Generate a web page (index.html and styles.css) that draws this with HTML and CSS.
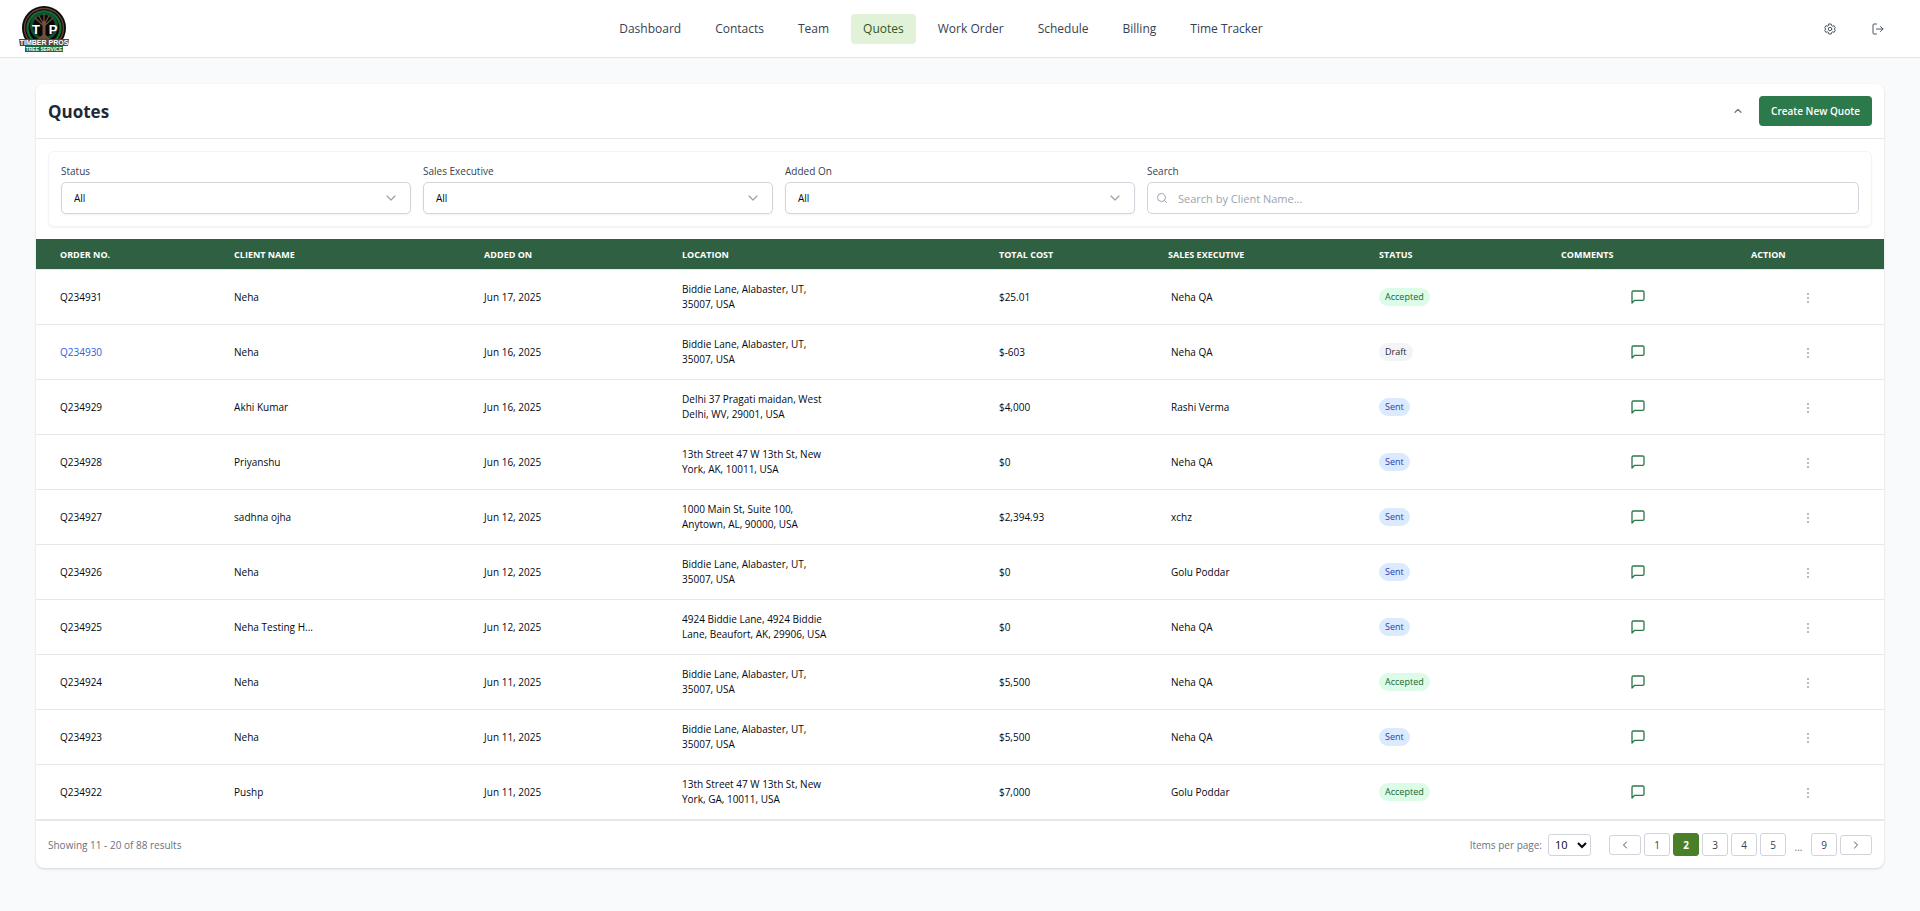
FILE: index.html
```html
<!DOCTYPE html>
<html lang="en">
<head>
<meta charset="utf-8">
<meta name="viewport" content="width=device-width, initial-scale=1">
<title>Quotes</title>
<link rel="stylesheet" href="styles.css">
</head>
<body>
<svg class="sprite" aria-hidden="true">
  <symbol id="comment" viewBox="0 0 24 24"><path d="M21 15a2 2 0 0 1-2 2H7l-4 4V5a2 2 0 0 1 2-2h14a2 2 0 0 1 2 2z"/></symbol>
  <symbol id="dots" viewBox="0 0 24 24"><circle cx="12" cy="4" r="2"/><circle cx="12" cy="12" r="2"/><circle cx="12" cy="20" r="2"/></symbol>
  <symbol id="down" viewBox="0 0 24 24"><path d="m4 8 8 8 8-8"/></symbol>
  <symbol id="left" viewBox="0 0 24 24"><path d="m15 18-6-6 6-6"/></symbol>
  <symbol id="right" viewBox="0 0 24 24"><path d="m9 18 6-6-6-6"/></symbol>
</svg>

<header class="topbar">
  <a class="logo" href="#" aria-label="Timber Pros Tree Service">
    <svg viewBox="0 0 52 46">
      <circle cx="26" cy="22" r="22" fill="#080a09"/>
      <circle cx="26" cy="22" r="19.500" fill="none" stroke="#6d4130" stroke-width="1.400"/>
      <circle cx="26" cy="22" r="16.500" fill="none" stroke="#15693a" stroke-width="2.400" stroke-dasharray="2 1"/>
      <circle cx="26" cy="20" r="12.500" fill="none" stroke="#124f2e" stroke-width="3" stroke-dasharray="1.500 1.500"/>
      <g fill="none" stroke="#76503c" stroke-width="1.200">
        <path d="M26 20 17 12M26 19l-5-9M26 18V8M26 19l5-9M26 20l9-8"/>
        <path d="M26 16v19" stroke-width="3"/>
        <path d="m26 29-7 6M26 29l7 6" stroke-width="2"/>
      </g>
      <text class="logo-initial" x="18" y="28">T</text>
      <text class="logo-initial" x="35" y="28">P</text>
      <path d="M1 33h50l-1 7H2z" fill="#55443d"/>
      <path d="M7 40h38v6H7z" fill="#176b3c"/>
      <text class="logo-name" x="26" y="39">TIMBER PROS</text>
      <text class="logo-sub" x="26" y="45">TREE SERVICE</text>
    </svg>
  </a>
  <nav class="nav" aria-label="Main">
    <a href="#">Dashboard</a>
    <a href="#">Contacts</a>
    <a href="#">Team</a>
    <a href="#" class="active" aria-current="page">Quotes</a>
    <a href="#">Work Order</a>
    <a href="#">Schedule</a>
    <a href="#">Billing</a>
    <a href="#">Time Tracker</a>
  </nav>
  <div class="tools">
    <button type="button" aria-label="Settings"><svg viewBox="0 0 24 24"><path d="M9.500 2h5l.6 3 2.200 1.300 2.900-1 2.500 4.300L20.400 12l2.300 2.400-2.500 4.300-2.900-1-2.200 1.300-.6 3h-5l-.6-3-2.200-1.300-2.900 1-2.500-4.300L3.600 12 1.300 9.600l2.500-4.300 2.900 1L8.900 5z"/><circle cx="12" cy="12" r="3.500"/></svg></button>
    <button type="button" aria-label="Log out"><svg viewBox="0 0 24 24"><path d="M9 2H4a2 2 0 0 0-2 2v16a2 2 0 0 0 2 2h5M9 12h13M17 7l5 5-5 5"/></svg></button>
  </div>
</header>

<main class="page">
  <section class="card">
    <div class="card-head">
      <h1>Quotes</h1>
      <button type="button" class="collapse" aria-label="Collapse filters"><svg viewBox="0 0 24 24"><path d="m5 15 7-7 7 7"/></svg></button>
      <button type="button" class="create">Create New Quote</button>
    </div>

    <form class="filters">
      <div class="field">
        <label for="status">Status</label>
        <div class="control"><select id="status"><option>All</option></select><svg class="chevron"><use href="#down"/></svg></div>
      </div>
      <div class="field">
        <label for="exec">Sales Executive</label>
        <div class="control"><select id="exec"><option>All</option></select><svg class="chevron"><use href="#down"/></svg></div>
      </div>
      <div class="field">
        <label for="added">Added On</label>
        <div class="control"><select id="added"><option>All</option></select><svg class="chevron"><use href="#down"/></svg></div>
      </div>
      <div class="field wide">
        <label for="search">Search</label>
        <div class="control"><svg class="glass" viewBox="0 0 24 24"><circle cx="11" cy="11" r="8"/><path d="m21 21-4-4"/></svg><input id="search" type="text" placeholder="Search by Client Name..."></div>
      </div>
    </form>

    <table class="quotes">
      <colgroup><col class="c-order"><col class="c-client"><col class="c-added"><col class="c-location"><col class="c-cost"><col class="c-exec"><col class="c-status"><col class="c-comments"><col class="c-action"></colgroup>
      <thead>
        <tr><th>Order No.</th><th>Client Name</th><th>Added On</th><th>Location</th><th>Total Cost</th><th>Sales Executive</th><th>Status</th><th>Comments</th><th>Action</th></tr>
      </thead>
      <tbody>
        <tr><td>Q234931</td><td>Neha</td><td>Jun 17, 2025</td><td>Biddie Lane, Alabaster, UT,<br>35007, USA</td><td>$25.01</td><td class="exec">Neha QA</td><td><span class="badge accepted">Accepted</span></td><td class="comments"><button type="button" aria-label="Comments"><svg><use href="#comment"/></svg></button></td><td class="action"><button type="button" aria-label="Actions"><svg><use href="#dots"/></svg></button></td></tr>
        <tr><td><a href="#">Q234930</a></td><td>Neha</td><td>Jun 16, 2025</td><td>Biddie Lane, Alabaster, UT,<br>35007, USA</td><td>$-603</td><td class="exec">Neha QA</td><td><span class="badge draft">Draft</span></td><td class="comments"><button type="button" aria-label="Comments"><svg><use href="#comment"/></svg></button></td><td class="action"><button type="button" aria-label="Actions"><svg><use href="#dots"/></svg></button></td></tr>
        <tr><td>Q234929</td><td>Akhi Kumar</td><td>Jun 16, 2025</td><td>Delhi 37 Pragati maidan, West<br>Delhi, WV, 29001, USA</td><td>$4,000</td><td class="exec">Rashi Verma</td><td><span class="badge sent">Sent</span></td><td class="comments"><button type="button" aria-label="Comments"><svg><use href="#comment"/></svg></button></td><td class="action"><button type="button" aria-label="Actions"><svg><use href="#dots"/></svg></button></td></tr>
        <tr><td>Q234928</td><td>Priyanshu</td><td>Jun 16, 2025</td><td>13th Street 47 W 13th St, New<br>York, AK, 10011, USA</td><td>$0</td><td class="exec">Neha QA</td><td><span class="badge sent">Sent</span></td><td class="comments"><button type="button" aria-label="Comments"><svg><use href="#comment"/></svg></button></td><td class="action"><button type="button" aria-label="Actions"><svg><use href="#dots"/></svg></button></td></tr>
        <tr><td>Q234927</td><td>sadhna ojha</td><td>Jun 12, 2025</td><td>1000 Main St, Suite 100,<br>Anytown, AL, 90000, USA</td><td>$2,394.93</td><td class="exec">xchz</td><td><span class="badge sent">Sent</span></td><td class="comments"><button type="button" aria-label="Comments"><svg><use href="#comment"/></svg></button></td><td class="action"><button type="button" aria-label="Actions"><svg><use href="#dots"/></svg></button></td></tr>
        <tr><td>Q234926</td><td>Neha</td><td>Jun 12, 2025</td><td>Biddie Lane, Alabaster, UT,<br>35007, USA</td><td>$0</td><td class="exec">Golu Poddar</td><td><span class="badge sent">Sent</span></td><td class="comments"><button type="button" aria-label="Comments"><svg><use href="#comment"/></svg></button></td><td class="action"><button type="button" aria-label="Actions"><svg><use href="#dots"/></svg></button></td></tr>
        <tr><td>Q234925</td><td>Neha Testing H...</td><td>Jun 12, 2025</td><td>4924 Biddie Lane, 4924 Biddie<br>Lane, Beaufort, AK, 29906, USA</td><td>$0</td><td class="exec">Neha QA</td><td><span class="badge sent">Sent</span></td><td class="comments"><button type="button" aria-label="Comments"><svg><use href="#comment"/></svg></button></td><td class="action"><button type="button" aria-label="Actions"><svg><use href="#dots"/></svg></button></td></tr>
        <tr><td>Q234924</td><td>Neha</td><td>Jun 11, 2025</td><td>Biddie Lane, Alabaster, UT,<br>35007, USA</td><td>$5,500</td><td class="exec">Neha QA</td><td><span class="badge accepted">Accepted</span></td><td class="comments"><button type="button" aria-label="Comments"><svg><use href="#comment"/></svg></button></td><td class="action"><button type="button" aria-label="Actions"><svg><use href="#dots"/></svg></button></td></tr>
        <tr><td>Q234923</td><td>Neha</td><td>Jun 11, 2025</td><td>Biddie Lane, Alabaster, UT,<br>35007, USA</td><td>$5,500</td><td class="exec">Neha QA</td><td><span class="badge sent">Sent</span></td><td class="comments"><button type="button" aria-label="Comments"><svg><use href="#comment"/></svg></button></td><td class="action"><button type="button" aria-label="Actions"><svg><use href="#dots"/></svg></button></td></tr>
        <tr><td>Q234922</td><td>Pushp</td><td>Jun 11, 2025</td><td>13th Street 47 W 13th St, New<br>York, GA, 10011, USA</td><td>$7,000</td><td class="exec">Golu Poddar</td><td><span class="badge accepted">Accepted</span></td><td class="comments"><button type="button" aria-label="Comments"><svg><use href="#comment"/></svg></button></td><td class="action"><button type="button" aria-label="Actions"><svg><use href="#dots"/></svg></button></td></tr>
      </tbody>
    </table>

    <footer class="card-foot">
      <p>Showing 11 - 20 of 88 results</p>
      <div class="per-page">
        <label for="per-page">Items per page:</label>
        <select id="per-page"><option>10</option></select>
      </div>
      <nav class="pager" aria-label="Pagination">
        <button type="button" class="step" aria-label="Previous page"><svg><use href="#left"/></svg></button>
        <button type="button">1</button>
        <button type="button" class="current" aria-current="page">2</button>
        <button type="button">3</button>
        <button type="button">4</button>
        <button type="button">5</button>
        <span>...</span>
        <button type="button">9</button>
        <button type="button" class="step" aria-label="Next page"><svg><use href="#right"/></svg></button>
      </nav>
    </footer>
  </section>
</main>
</body>
</html>
```
FILE: styles.css
```css
* { box-sizing: border-box; }

body {
  margin: 0;
  min-height: 100vh;
  background: #f9fafb;
  color: #030712;
  font-family: "Open Sans", "Noto Sans", sans-serif;
  font-size: 11px;
  line-height: 16px;
}

button, input, select { font: inherit; color: inherit; }
button { padding: 0; border: 0; background: none; cursor: pointer; }
a { color: inherit; text-decoration: none; }
svg { display: block; fill: none; stroke: currentColor; stroke-width: 2; stroke-linecap: round; stroke-linejoin: round; }
.sprite { position: absolute; width: 0; height: 0; }

/* Top bar */
.topbar {
  display: flex;
  align-items: center;
  justify-content: space-between;
  height: 58px;
  padding: 0 24px 0 18px;
  background: #fff;
  border-bottom: 1px solid #e5e7eb;
}
.logo svg { width: 52px; height: 46px; stroke: none; }
.logo text { text-anchor: middle; font-family: "Liberation Sans", sans-serif; font-weight: 700; fill: #fff; }
.logo .logo-initial { font-size: 13px; }
.logo .logo-name { font-size: 7px; }
.logo .logo-sub { font-size: 5px; }

.nav { display: flex; gap: 10px; }
.nav a { padding: 7px 12px; border-radius: 4px; color: #374151; font-size: 12px; font-weight: 500; }
.nav .active { background: #e2f2d8; color: #33561d; }

.tools { display: flex; gap: 12px; color: #4b5563; }
.tools button { display: flex; align-items: center; justify-content: center; width: 36px; height: 36px; }
.tools svg { width: 12px; height: 12px; }

/* Card */
.page { padding: 26px 36px; }
.card {
  background: #fff;
  border-radius: 8px;
  box-shadow: 0 1px 3px rgba(0, 0, 0, .1), 0 1px 2px rgba(0, 0, 0, .06);
}
.card-head { display: flex; align-items: center; gap: 16px; padding: 12px; border-bottom: 1px solid #e5e7eb; }
h1 { flex: 1; margin: 0; padding-top: 2px; color: #1f2937; font-size: 17px; line-height: 24px; font-weight: 700; }
.collapse { color: #6b7280; }
.collapse svg { width: 10px; height: 10px; stroke-width: 3; }
.create { padding: 7px 12px; border-radius: 4px; background: #2c7a4b; color: #fff; font-size: 10px; font-weight: 600; }

/* Filters */
.filters {
  display: grid;
  grid-template-columns: repeat(5, 1fr);
  gap: 12px;
  margin: 12px;
  padding: 11px 12px 12px;
  border: 1px solid #f3f4f6;
  border-radius: 6px;
  box-shadow: 0 1px 2px rgba(0, 0, 0, .05);
}
.wide { grid-column: span 2; }
.field label { display: block; padding-bottom: 3px; color: #374151; font-size: 10px; font-weight: 500; }
.control { position: relative; }
.control select, .control input {
  display: block;
  width: 100%;
  height: 32px;
  padding: 0 12px;
  border: 1px solid #d1d5db;
  border-radius: 5px;
  background: #fff;
  appearance: none;
}
.control select { font-size: 10px; box-shadow: 0 1px 2px rgba(0, 0, 0, .05); }
.control input { padding-left: 30px; }
.control input::placeholder { color: #9ca3af; opacity: 1; }
.chevron { position: absolute; top: 10px; right: 14px; width: 12px; height: 12px; color: #9ca3af; stroke-width: 2.5; }
.glass { position: absolute; top: 10px; left: 9px; width: 12px; height: 12px; color: #9ca3af; }

/* Table */
.quotes { width: 100%; table-layout: fixed; border-collapse: separate; border-spacing: 0; font-size: 10px; line-height: 15px; }
.c-order { width: 9.42%; }
.c-client { width: 13.53%; }
.c-added { width: 10.71%; }
.c-location { width: 17.15%; }
.c-cost { width: 9.15%; }
.c-exec { width: 11.42%; }
.c-status { width: 9.85%; }
.c-comments { width: 10.28%; }
.c-action { width: 8.49%; }
th, td { padding: 0 0 0 24px; text-align: left; border-bottom: 1px solid #e5e7eb; }
th { height: 31px; background: #2f6042; color: #fff; font-size: 9px; font-weight: 700; text-transform: uppercase; background-clip: padding-box; }
td { height: 55px; }
td a { color: #2563eb; }
td.exec { padding-left: 27px; }
td.comments { padding-left: 12px; text-align: center; color: #2c7a4b; }
td.action { padding-left: 4px; text-align: center; color: #9ca3af; }
td button { vertical-align: middle; }
td.comments svg { width: 16px; height: 16px; }
td.action svg { width: 12px; height: 12px; fill: currentColor; stroke: none; }

.badge { display: inline-block; padding: 0 6px; border-radius: 9px; font-size: 9px; line-height: 18px; font-weight: 500; }
.accepted { background: #dcfce7; color: #166534; }
.draft { background: #f3f4f6; color: #1f2937; }
.sent { background: #dbeafe; color: #1e40af; }

/* Footer */
.card-foot { display: flex; align-items: center; gap: 18px; padding: 12px; border-top: 1px solid #e5e7eb; color: #6b7280; font-size: 10px; }
.card-foot p { flex: 1; margin: 0; }
.per-page { display: flex; align-items: center; gap: 6px; }
.per-page select { width: 43px; height: 22px; padding: 0 2px; border: 1px solid #d1d5db; border-radius: 3px; background: #fff; color: #030712; font-size: 11px; }
.pager { display: flex; align-items: center; gap: 3px; }
.pager button { display: flex; align-items: center; justify-content: center; width: 26px; height: 23px; border: 1px solid #d1d5db; border-radius: 3px; background: #fff; color: #374151; font-weight: 500; }
.pager .step { width: 32px; height: 20px; color: #4b5563; }
.pager .step svg { width: 12px; height: 12px; }
.pager .current { background: #4a7f2a; border-color: #4a7f2a; color: #fff; font-weight: 700; }
.pager span { width: 19px; padding-top: 4px; text-align: center; }
```
